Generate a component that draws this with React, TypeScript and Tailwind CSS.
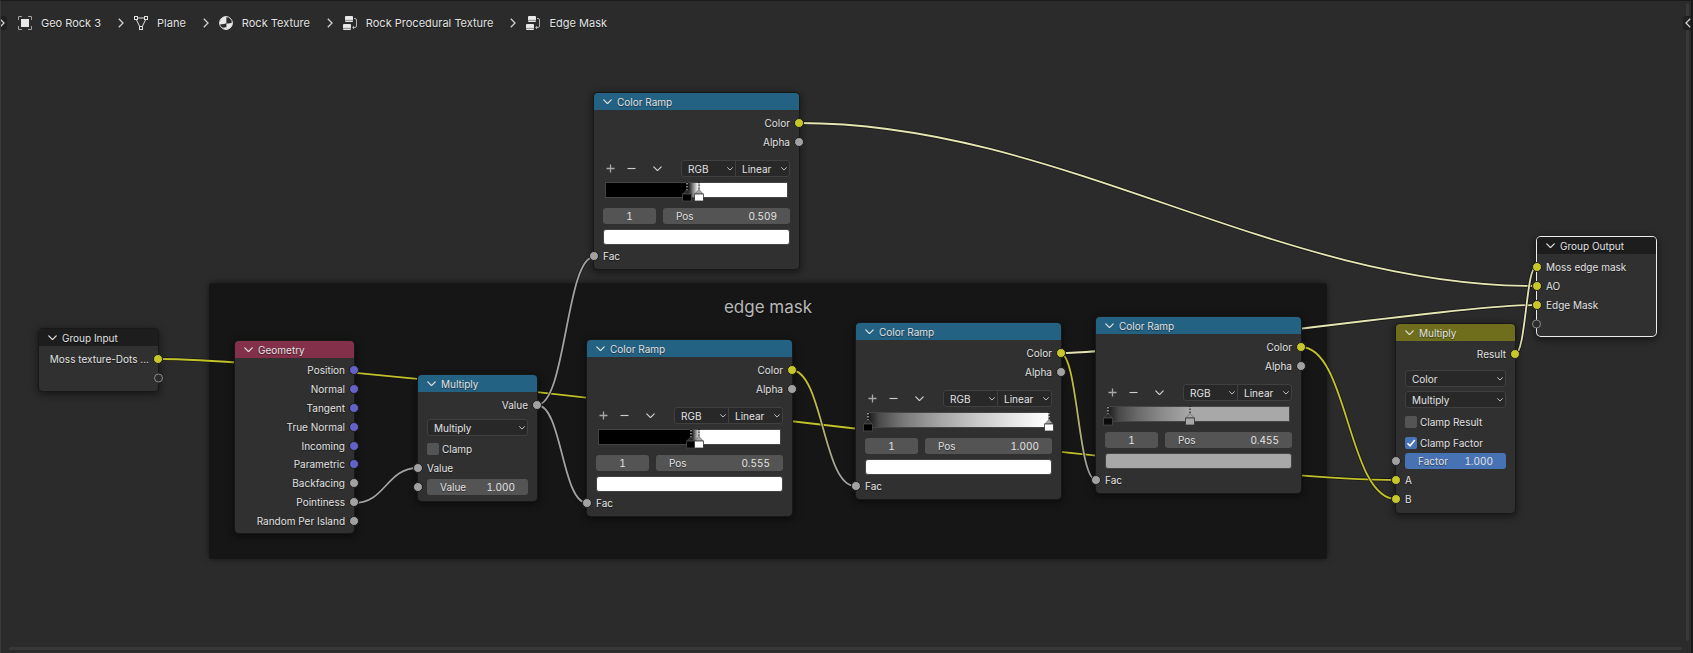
import React from "react";

type SocketColor = "yellow" | "gray" | "blue" | "empty";

const SOCKET_FILL: Record<SocketColor, string> = {
  yellow: "bg-[#c7c729] border-[#1c1c1c]",
  gray: "bg-[#a1a1a1] border-[#1c1c1c]",
  blue: "bg-[#6363c7] border-[#1c1c1c]",
  empty: "bg-[#2b2b2b] border-[#8a8a8a]",
};

function Socket({ color, side }: { color: SocketColor; side: "left" | "right" }) {
  const edge = side === "left" ? "left-[-5px]" : "right-[-5px]";
  const size = color === "empty" ? "size-[9px]" : "size-[10px]";
  return <span className={`absolute top-1/2 -translate-y-1/2 rounded-full border ${size} ${edge} ${SOCKET_FILL[color]}`} />;
}

function Chevron({ className }: { className: string }) {
  return (
    <svg viewBox="0 0 8 5" className={className} fill="none" stroke="currentColor" strokeWidth="1.1" strokeLinecap="round" strokeLinejoin="round" aria-hidden="true">
      <path d="M0.7 0.8 L4 4.1 L7.3 0.8" />
    </svg>
  );
}

function Row({
  side,
  color,
  children,
  className = "h-[19px]",
}: {
  side: "left" | "right";
  color: SocketColor;
  children?: React.ReactNode;
  className?: string;
}) {
  return (
    <div className={`relative flex items-center whitespace-nowrap px-[9px] ${side === "right" ? "justify-end" : ""} ${className}`}>
      <Socket color={color} side={side} />
      {children}
    </div>
  );
}

const HEADER: Record<string, string> = {
  blue: "bg-[#246283]",
  red: "bg-[#83314a]",
  olive: "bg-[#6e6e1d]",
  dark: "bg-[#1d1d1d]",
};

function NodeBox({
  title,
  tone,
  place,
  selected,
  children,
}: {
  title: string;
  tone: "blue" | "red" | "olive" | "dark";
  place: string;
  selected?: boolean;
  children: React.ReactNode;
}) {
  const ring = selected ? "ring-1 ring-[#ededed]" : "ring-1 ring-[#181818]";
  return (
    <section className={`absolute rounded-[4px] bg-[#303030] shadow-[0_2px_7px_2px_rgba(0,0,0,0.45)] ${ring} ${place}`}>
      <h2 className={`flex h-[17px] items-center gap-[5px] rounded-t-[4px] pl-[9px] ${HEADER[tone]}`}>
        <Chevron className="w-[9px]" />
        {title}
      </h2>
      {children}
    </section>
  );
}

function Select({ label, value, options, className }: { label: string; value: string; options: string[]; className: string }) {
  return (
    <div className={`relative h-[17px] border border-[#404040] bg-[#282828] ${className}`}>
      <select
        aria-label={label}
        defaultValue={value}
        className="block h-full w-full appearance-none bg-transparent pl-[6px] outline-none"
      >
        {options.map((o) => (
          <option key={o}>{o}</option>
        ))}
      </select>
      <Chevron className="pointer-events-none absolute right-[2px] top-[6px] w-[6px]" />
    </div>
  );
}

function NumberField({ label, value, active }: { label: string; value: string; active?: boolean }) {
  return (
    <label className={`flex h-4 min-w-0 flex-1 items-center justify-between rounded-[3px] px-[13px] ${active ? "bg-[#4772b3]" : "bg-[#545454]"}`}>
      <span>{label}</span>
      <input type="text" defaultValue={value} className="w-10 bg-transparent text-right tabular-nums outline-none" />
    </label>
  );
}

function Check({ label, checked }: { label: string; checked?: boolean }) {
  return (
    <label className="flex items-center gap-[3px]">
      <span className="relative flex size-3">
        <input
          type="checkbox"
          defaultChecked={checked}
          className="peer size-3 appearance-none rounded-[2px] bg-[#545454] checked:bg-[#4772b3]"
        />
        <svg viewBox="0 0 12 12" className="pointer-events-none absolute inset-0 hidden peer-checked:block" fill="none" stroke="#fff" strokeWidth="1.6" aria-hidden="true">
          <path d="M2.5 6.2 L5 8.7 L9.8 3" />
        </svg>
      </span>
      {label}
    </label>
  );
}

function Stop({ at, fill, light }: { at: number; fill: string; light?: boolean }) {
  return (
    <svg viewBox="0 0 10 20" className="absolute -top-px h-5 w-[10px] -translate-x-1/2" style={{ left: `${at}%` }} aria-hidden="true">
      <path d="M5 0 V9" stroke="#000" strokeWidth="1" />
      <path d="M5 1 V9" stroke="#fff" strokeWidth="1" strokeDasharray="1.5 1.5" />
      <path d="M5 7.5 L9 11.8 H1 Z" fill={light ? "#a8a8a8" : "#2a2a2a"} stroke="#555" strokeWidth="0.6" />
      <rect x="0.6" y="12" width="8.8" height="7" fill={fill} stroke={light ? "#333" : "#4a4a4a"} strokeWidth="0.8" />
    </svg>
  );
}

interface RampProps {
  place: string;
  gradient: string;
  swatch: string;
  pos: string;
  stops: { at: number; fill: string; light?: boolean }[];
}

function ColorRamp({ place, gradient, swatch, pos, stops }: RampProps) {
  return (
    <NodeBox title="Color Ramp" tone="blue" place={`w-[205px] ${place}`}>
      <div className="pt-[3px]">
        <Row side="right" color="yellow">Color</Row>
        <Row side="right" color="gray">Alpha</Row>
      </div>
      <div className="px-[9px] pt-[9px]">
        <div className="flex items-center">
          <div className="flex flex-1 items-center text-[#cfcfcf]">
            <button type="button" aria-label="Add stop" className="w-[15px]">
              <svg viewBox="0 0 9 9" className="ml-[3px] size-[9px]" stroke="#a8a8a8" strokeWidth="1.3"><path d="M4.5 0.5 V8.5 M0.5 4.5 H8.5" /></svg>
            </button>
            <button type="button" aria-label="Remove stop" className="ml-[6px] w-4">
              <svg viewBox="0 0 9 9" className="ml-[3px] size-[9px]" stroke="currentColor" strokeWidth="1.1"><path d="M0.5 4.5 H8.5" /></svg>
            </button>
            <button type="button" aria-label="Ramp tools" className="ml-[13px] w-[9px]">
              <Chevron className="w-[9px]" />
            </button>
          </div>
          <Select label="Color mode" value="RGB" options={["RGB", "HSV", "HSL"]} className="w-[55px] rounded-l-[3px]" />
          <Select label="Interpolation" value="Linear" options={["Linear", "Ease", "Constant"]} className="-ml-px w-[55px] rounded-r-[3px]" />
        </div>
        <div className="relative mx-[2px] mt-[5px] h-4 border border-[#454545]" style={{ backgroundImage: gradient }}>
          {stops.map((s) => (
            <Stop key={s.at} {...s} />
          ))}
        </div>
        <div className="mt-[10px] flex gap-[7px]">
          <input type="text" aria-label="Active stop" defaultValue="1" className="h-4 w-[53px] rounded-[3px] bg-[#545454] text-center tabular-nums outline-none" />
          <NumberField label="Pos" value={pos} />
        </div>
        <button type="button" aria-label="Stop color" className="mt-[5px] block h-4 w-full rounded-[3px] border border-[#444]" style={{ backgroundColor: swatch }} />
      </div>
      <Row side="left" color="gray" className="mt-px h-[19px]">Fac</Row>
      <div className="h-[4px]" />
    </NodeBox>
  );
}

const LINKS: { d: string; stroke: string }[] = [
  { d: "M158 359 C355 359 1199 480 1396 480", stroke: "#c2c22a" },
  { d: "M354 503 C386 503 386 468 418 468", stroke: "#a1a1a1" },
  { d: "M537 405 C566 405 566 257 594 257", stroke: "#a1a1a1" },
  { d: "M537 405 C562 405 562 503 587 503", stroke: "#a1a1a1" },
  { d: "M791 370 C823 370 823 486 855 486", stroke: "url(#fadeA)" },
  { d: "M1060 353 C1078 353 1078 480 1096 480", stroke: "url(#fadeB)" },
  { d: "M1301 347 C1348 347 1348 499 1396 499", stroke: "#c2c22a" },
  { d: "M1060 353 C1139 353 1457 305 1536 305", stroke: "#e6e6b4" },
  { d: "M799 123 C1062 123 1273 286 1536 286", stroke: "#e6e6b4" },
  { d: "M1515 354 C1526 354 1526 267 1536 267", stroke: "#e6e6b4" },
];

function Links() {
  return (
    <svg className="pointer-events-none absolute inset-0 h-full w-full" fill="none" aria-hidden="true">
      <defs>
        <linearGradient id="fadeA" gradientUnits="userSpaceOnUse" x1="0" x2="0" y1="370" y2="486">
          <stop offset="0.1" stopColor="#c2c22a" />
          <stop offset="0.9" stopColor="#a1a1a1" />
        </linearGradient>
        <linearGradient id="fadeB" gradientUnits="userSpaceOnUse" x1="0" x2="0" y1="353" y2="480">
          <stop offset="0.1" stopColor="#c2c22a" />
          <stop offset="0.9" stopColor="#a1a1a1" />
        </linearGradient>
      </defs>
      {LINKS.map((l) => (
        <g key={l.d}>
          <path d={l.d} stroke="#101010" strokeOpacity="0.7" strokeWidth="3.4" />
          <path d={l.d} stroke={l.stroke} strokeWidth="1.8" />
        </g>
      ))}
    </svg>
  );
}

function ObjectIcon() {
  return (
    <svg viewBox="0 0 14 14" className="size-[14px]" fill="none" aria-hidden="true">
      <rect x="3" y="3" width="8" height="8" fill="#e8e8e8" />
      <path d="M0.5 4 V0.5 H4 M10 0.5 H13.5 V4 M13.5 10 V13.5 H10 M4 13.5 H0.5 V10" stroke="#a0a0a0" />
    </svg>
  );
}

function MeshIcon() {
  return (
    <svg viewBox="0 0 14 14" className="size-[14px]" fill="none" stroke="#e0e0e0" aria-hidden="true">
      <path d="M3.5 2 H10.5 M2.3 3.5 L5.7 10.5 M11.7 3.5 L8.3 10.5" />
      <rect x="0.5" y="0.5" width="3" height="3" />
      <rect x="10.5" y="0.5" width="3" height="3" />
      <rect x="5.5" y="10.5" width="3" height="3" />
    </svg>
  );
}

function MaterialIcon() {
  return (
    <svg viewBox="0 0 14 14" className="size-[14px]" fill="none" aria-hidden="true">
      <circle cx="7" cy="7" r="6.4" stroke="#e8e8e8" fill="#2b2b2b" />
      <path d="M7.4 7.2 V0.6 A6.4 6.4 0 0 0 0.6 7 L1 8 C3 8.6 5 8.2 7.4 7.2 Z" fill="#e8e8e8" />
      <path d="M7.4 7.4 C9.8 7.6 11.8 7.2 13.4 6.4 A6.4 6.4 0 0 1 7.4 13.4 Z" fill="#e8e8e8" />
      <path d="M7.6 13.4 A6.4 6.4 0 0 1 2.6 11.6 C4.4 12 6 11.6 7.6 11 Z" fill="#e8e8e8" />
    </svg>
  );
}

function NodeTreeIcon() {
  return (
    <svg viewBox="0 0 14 14" className="size-[14px]" fill="none" aria-hidden="true">
      <path d="M3 0 H9 Q10 0 10 1 V5 Q10 6 9 6 H3 Q2 6 2 5 V1 Q2 0 3 0 Z" fill="#e8e8e8" />
      <path d="M1 8 H7 Q8 8 8 9 V13 Q8 14 7 14 H1 Q0 14 0 13 V9 Q0 8 1 8 Z" fill="#e8e8e8" />
      <path d="M2 4.4 H10 M0 12.4 H8" stroke="#2b2b2b" strokeWidth="0.5" />
      <path d="M11 2.5 H12 Q13.5 2.5 13.5 4 V10 Q13.5 11.5 12 11.5 H10 M11 10 L9.6 11.5 L11 13" stroke="#b0b0b0" />
    </svg>
  );
}

const CRUMBS = [
  { label: "Geo Rock 3", Icon: ObjectIcon },
  { label: "Plane", Icon: MeshIcon },
  { label: "Rock Texture", Icon: MaterialIcon },
  { label: "Rock Procedural Texture", Icon: NodeTreeIcon },
  { label: "Edge Mask", Icon: NodeTreeIcon },
];

function Angle({ className = "" }: { className?: string }) {
  return (
    <svg viewBox="0 0 6 10" className={`h-[10px] w-[6px] shrink-0 ${className}`} fill="none" stroke="#d0d0d0" strokeWidth="1.3" aria-hidden="true">
      <path d="M0.8 0.8 L5 5 L0.8 9.2" />
    </svg>
  );
}

function Breadcrumbs() {
  return (
    <nav aria-label="Node tree path" className="relative flex items-center pt-[12px] text-[11px] leading-5 text-[#e2e2e2]">
      <button type="button" aria-label="Show toolbar" className="flex h-[14px] w-[6px] items-center justify-end rounded-r-[3px] bg-[#202020]">
        <Angle className="mr-[2px]" />
      </button>
      <ol className="flex items-center pl-[11px]">
        {CRUMBS.map(({ label, Icon }, i) => (
          <li key={label} className="flex items-center">
            {i > 0 && <Angle className="ml-[17px] mr-[10px]" />}
            <a href="#" className="flex items-center gap-[9px] whitespace-nowrap">
              <Icon />
              {label}
            </a>
          </li>
        ))}
      </ol>
      <button type="button" aria-label="Show sidebar" className="ml-auto flex h-[14px] w-[8px] items-center rounded-l-[3px] bg-[#202020] pl-[2px]">
        <Angle className="rotate-180" />
      </button>
    </nav>
  );
}

const GEOMETRY: [string, SocketColor][] = [
  ["Position", "blue"],
  ["Normal", "blue"],
  ["Tangent", "blue"],
  ["True Normal", "blue"],
  ["Incoming", "blue"],
  ["Parametric", "blue"],
  ["Backfacing", "gray"],
  ["Pointiness", "gray"],
  ["Random Per Island", "gray"],
];

export default function App() {
  return (
    <main className="relative min-h-screen overflow-hidden border-l border-r-2 border-t border-l-[#3a3a3a] border-r-[#191919] border-t-[#1a1a1a] bg-[#2b2b2b] font-['Inter',sans-serif] text-[10px] leading-4 text-[#e2e2e2] [text-shadow:0_1px_1px_rgba(0,0,0,0.5)]">
      <div className="absolute -left-px -top-px h-full w-full">
        <section className="absolute left-[209px] top-[283px] h-[276px] w-[1118px] rounded-[3px] bg-[#161616] shadow-[0_0_6px_rgba(0,0,0,0.5)]">
          <h1 className="pt-[12px] text-center text-[17px] leading-6 text-[#b8b8b8]">edge mask</h1>
        </section>
        <Links />

        <NodeBox title="Group Input" tone="dark" place="left-[39px] top-[329px] w-[119px]">
          <div className="pb-[4px] pt-[3px]">
            <Row side="right" color="yellow">Moss texture-Dots ...</Row>
            <Row side="right" color="empty" />
          </div>
        </NodeBox>

        <NodeBox title="Geometry" tone="red" place="left-[235px] top-[341px] w-[119px]">
          <div className="flex h-[175px] flex-col pb-[3px] pt-[3px]">
            {GEOMETRY.map(([label, color]) => (
              <Row key={label} side="right" color={color} className="flex-1">
                {label}
              </Row>
            ))}
          </div>
        </NodeBox>

        <NodeBox title="Multiply" tone="blue" place="left-[418px] top-[375px] w-[119px]">
          <div className="pb-[5px] pt-[3px]">
            <Row side="right" color="gray">Value</Row>
            <div className="flex flex-col gap-[5px] px-[9px] pb-px pt-[5px]">
              <Select label="Operation" value="Multiply" options={["Multiply", "Add", "Subtract"]} className="rounded-[3px]" />
              <Check label="Clamp" />
            </div>
            <Row side="left" color="gray">Value</Row>
            <Row side="left" color="gray"><NumberField label="Value" value="1.000" /></Row>
          </div>
        </NodeBox>

        <ColorRamp
          place="left-[594px] top-[93px]"
          gradient="linear-gradient(90deg,#000 0 45%,#fff 51%)"
          swatch="#ffffff"
          pos="0.509"
          stops={[{ at: 44.5, fill: "#000" }, { at: 51.5, fill: "#fff", light: true }]}
        />
        <ColorRamp
          place="left-[587px] top-[340px]"
          gradient="linear-gradient(90deg,#000 0 51%,#fff 55.5%)"
          swatch="#ffffff"
          pos="0.555"
          stops={[{ at: 51, fill: "#000" }, { at: 55.5, fill: "#fff", light: true }]}
        />
        <ColorRamp
          place="left-[856px] top-[323px]"
          gradient="linear-gradient(90deg,#181818 0%,#494949 6%,#7a7a7a 20%,#a6a6a6 40%,#c8c8c8 60%,#e5e5e5 80%,#fff 100%)"
          swatch="#ffffff"
          pos="1.000"
          stops={[{ at: 0, fill: "#000" }, { at: 100, fill: "#fff", light: true }]}
        />
        <ColorRamp
          place="left-[1096px] top-[317px]"
          gradient="linear-gradient(90deg,#1c1c1c 0%,#484848 6%,#6c6c6c 17%,#8b8b8b 30%,#a8a8a8 45.5%)"
          swatch="#a8a8a8"
          pos="0.455"
          stops={[{ at: 0, fill: "#0a0a0a" }, { at: 45.5, fill: "#a8a8a8", light: true }]}
        />

        <NodeBox title="Multiply" tone="olive" place="left-[1396px] top-[324px] w-[119px]">
          <div className="pb-[5px] pt-[3px]">
            <Row side="right" color="yellow">Result</Row>
            <div className="flex flex-col gap-[4px] px-[9px] pt-[7px]">
              <Select label="Data type" value="Color" options={["Color", "Float", "Vector"]} className="rounded-[3px]" />
              <Select label="Blending mode" value="Multiply" options={["Multiply", "Mix", "Add"]} className="rounded-[3px]" />
              <div className="flex flex-col gap-[5px] pt-[2px]">
                <Check label="Clamp Result" />
                <Check label="Clamp Factor" checked />
              </div>
            </div>
            <Row side="left" color="gray"><NumberField label="Factor" value="1.000" active /></Row>
            <Row side="left" color="yellow">A</Row>
            <Row side="left" color="yellow">B</Row>
          </div>
        </NodeBox>

        <NodeBox title="Group Output" tone="dark" selected place="left-[1537px] top-[237px] w-[119px]">
          <div className="pb-[3px] pt-[3px]">
            <Row side="left" color="yellow">Moss edge mask</Row>
            <Row side="left" color="yellow">AO</Row>
            <Row side="left" color="yellow">Edge Mask</Row>
            <Row side="left" color="empty" />
          </div>
        </NodeBox>
      </div>
      <div className="absolute bottom-[12px] right-[2px] top-[2px] w-[3px] rounded-full bg-[#383838]" />
      <div className="absolute bottom-[3px] left-[8px] right-[9px] h-[3px] rounded-full bg-[#383838]" />
      <Breadcrumbs />
    </main>
  );
}
